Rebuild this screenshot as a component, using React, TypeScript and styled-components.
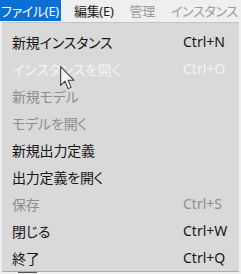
import React from 'react';
import styled, { createGlobalStyle } from 'styled-components';

const GlobalStyle = createGlobalStyle`
  html, body {
    margin: 0;
    padding: 0;
    background: #efefef;
  }
  body {
    font-family: "Noto Sans", "Noto Sans CJK JP", sans-serif;
    font-feature-settings: "palt";
  }
`;

const Window = styled.div`
  width: 241px;
  height: 274px;
  overflow: hidden;
  position: relative;
  background: #efefef;
`;

const MenuBar = styled.div`
  display: flex;
  height: 22px;
  white-space: nowrap;
  font-size: 13px;
  letter-spacing: -0.3px;
`;

const TopItem = styled.div<{ $active?: boolean; $disabled?: boolean }>`
  height: 21px;
  line-height: 22px;
  padding: ${({ $active }) => ($active ? '0 2px 0 1px' : '0 8px')};
  margin-right: ${({ $active }) => ($active ? '5px' : '0')};
  background: ${({ $active }) => ($active ? '#0b6fd4' : 'transparent')};
  color: ${({ $active, $disabled }) =>
    $active ? '#ffffff' : $disabled ? '#9a9a9a' : '#1b1b1b'};
`;

const Dropdown = styled.div`
  margin: 0 2px;
  background: #d9d9d9;
  border-top: 1px solid #c4c4c4;
  border-bottom: 1px solid #a9a9a9;
  padding: 5px 0 0 10px;
`;

const Row = styled.div<{ $state: 'on' | 'off' | 'hover' }>`
  display: grid;
  grid-template-columns: 171px 1fr;
  align-items: center;
  height: 27px;
  font-size: 14px;
  white-space: nowrap;
  color: ${({ $state }) =>
    $state === 'on' ? '#151515' : $state === 'hover' ? '#f4f4f4' : '#8e8e8e'};
`;

const Label = styled.span`
  letter-spacing: -0.2px;
`;

const Shortcut = styled.span``;

const BottomStrip = styled.div`
  height: 2px;
  display: flex;
  align-items: flex-start;
`;

const Tick = styled.div`
  margin-left: 18px;
  width: 19px;
  height: 1px;
  background: #555;
`;

const Pointer = styled.svg`
  position: absolute;
  left: 59px;
  top: 66px;
`;

type Item = { label: string; key?: string; state: 'on' | 'off' | 'hover' };

const items: Item[] = [
  { label: '新規インスタンス', key: 'Ctrl+N', state: 'on' },
  { label: 'インスタンスを開く', key: 'Ctrl+O', state: 'hover' },
  { label: '新規モデル', state: 'off' },
  { label: 'モデルを開く', state: 'off' },
  { label: '新規出力定義', state: 'on' },
  { label: '出力定義を開く', state: 'on' },
  { label: '保存', key: 'Ctrl+S', state: 'off' },
  { label: '閉じる', key: 'Ctrl+W', state: 'on' },
  { label: '終了', key: 'Ctrl+Q', state: 'on' },
];

const App: React.FC = () => {
  return (
    <Window>
      <GlobalStyle />
      <MenuBar>
        <TopItem $active>ファイル(E)</TopItem>
        <TopItem>編集(E)</TopItem>
        <TopItem $disabled>管理</TopItem>
        <TopItem $disabled>インスタンス</TopItem>
      </MenuBar>
      <Dropdown>
        {items.map((it) => (
          <Row key={it.label} $state={it.state}>
            <Label>{it.label}</Label>
            <Shortcut>{it.key}</Shortcut>
          </Row>
        ))}
      </Dropdown>
      <BottomStrip>
        <Tick />
      </BottomStrip>
      <Pointer width="17" height="24" viewBox="0 0 13 21">
        <path
          d="M0.5 0.5 L0.5 17 L4.3 13.3 L7 19.8 L9.6 18.7 L7 12.4 L12 12.4 Z"
          fill="#f2f2f2"
          stroke="#3a3a3a"
          strokeWidth="0.9"
          strokeLinejoin="round"
        />
      </Pointer>
    </Window>
  );
};

export default App;
